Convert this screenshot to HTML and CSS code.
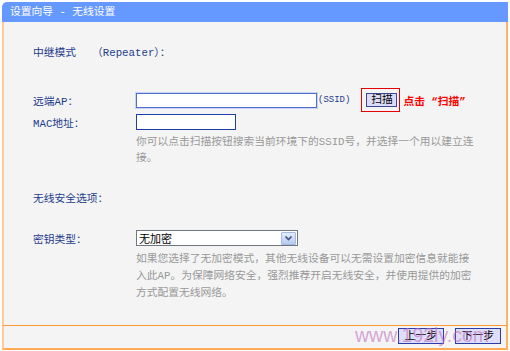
FILE: index.html
```html
<!DOCTYPE html>
<html lang="zh-CN">
<head>
<meta charset="utf-8">
<title>设置向导 - 无线设置</title>
<link rel="stylesheet" href="styles.css">
</head>
<body>
<div class="panel">
  <div class="hd">设置向导 - 无线设置</div>
  <div class="bd">
    <div class="row title"><span class="name">中继模式</span><span class="mode">（Repeater）：</span></div>
    <div class="row ap">
      <span class="lbl">远端AP：</span>
      <input class="txt txt-ap" type="text">
      <span class="ssid">(SSID)</span>
      <span class="scanbox"><button class="btn scan" type="button">扫描</button></span>
      <span class="tip">点击 “扫描”</span>
    </div>
    <div class="row mac">
      <span class="lbl">MAC地址：</span>
      <input class="txt txt-mac" type="text">
    </div>
    <p class="hint hint1">你可以点击扫描按钮搜索当前环境下的SSID号，并选择一个用以建立连接。</p>
    <div class="row sec"><span class="lbl">无线安全选项：</span></div>
    <div class="row key">
      <span class="lbl">密钥类型：</span>
      <div class="select">
        <span class="sel-val">无加密</span>
        <span class="arrow"><svg width="13" height="12" viewBox="0 0 13 12"><path d="M3.5 4.5 L6.5 7.5 L9.5 4.5" fill="none" stroke="#3d5585" stroke-width="1.7"/></svg></span>
      </div>
    </div>
    <p class="hint hint2">如果您选择了无加密模式，其他无线设备可以无需设置加密信息就能接入此AP。为保障网络安全，强烈推荐开启无线安全，并使用提供的加密方式配置无线网络。</p>
  </div>
  <div class="ft">
    <button class="btn nav" type="button">上一步</button>
    <button class="btn nav" type="button">下一步</button>
    <span class="wm">www.192ly.com</span>
  </div>
</div>
</body>
</html>
```

FILE: styles.css
```css
body {
  margin: 0;
  background: #ffffff;
  font-family: "Liberation Mono", "Noto Sans CJK SC", monospace;
  font-size: 10.75px;
  color: #1e3c8c;
}

.panel {
  width: 506px;
  margin: 2px 0 0 2px;
}

.hd {
  height: 20px;
  line-height: 20px;
  background: #6699ff;
  color: #ffffff;
  padding-left: 8px;
  border-top-left-radius: 5px;
}

.bd {
  height: 303px;
  box-sizing: border-box;
  background: #f4f4f4;
  border-left: 2px solid #ffcc99;
  border-right: 2px solid #ffb366;
  padding: 19px 0 0 29px;
}

.row {
  display: flex;
  align-items: center;
}

.lbl {
  width: 103px;
  flex: none;
  white-space: nowrap;
}

.title {
  height: 20px;
}

.mode {
  margin-left: 16px;
}

.ap {
  height: 24px;
  margin-top: 27px;
}

.mac {
  height: 18px;
  margin-top: 1px;
}

.txt {
  box-sizing: border-box;
  margin: 0;
  padding: 0 2px;
  background: #ffffff;
  font: inherit;
  outline: none;
}

.txt-ap {
  width: 181px;
  height: 15px;
  border: 1px solid #4d6fd0;
  box-shadow: 0 0 0 1px rgba(120, 150, 230, 0.35);
}

.txt-mac {
  width: 100px;
  height: 16px;
  border: 1px solid #1f3fa8;
}

.ssid {
  font-size: 9px;
  margin-left: 1px;
}

.scanbox {
  display: inline-flex;
  margin-left: 11px;
  padding: 4px 2px 4px 4px;
  border: 1px solid #e60000;
}

.btn {
  box-sizing: border-box;
  margin: 0;
  padding: 0;
  font: inherit;
  color: #000000;
  background: #dcdcf8;
  border: 1px solid #3a4690;
  text-align: center;
  line-height: 12px;
}

.scan {
  width: 31px;
  height: 14px;
}

.tip {
  margin-left: 3px;
  color: #ff0000;
  font-weight: bold;
}

.hint {
  width: 340px;
  margin: 3px 0 0 103px;
  color: #999999;
  line-height: 16px;
}

.sec {
  height: 20px;
  margin-top: 21px;
}

.key {
  height: 18px;
  margin-top: 22px;
}

.select {
  box-sizing: border-box;
  width: 162px;
  height: 16px;
  display: flex;
  align-items: center;
  justify-content: space-between;
  background: #ffffff;
  border: 1px solid #6f7780;
  color: #000000;
  font-size: 11px;
}

.sel-val {
  padding-left: 2px;
}

.arrow {
  box-sizing: border-box;
  width: 15px;
  height: 13px;
  margin-right: 1px;
  display: flex;
  align-items: center;
  justify-content: center;
  background: linear-gradient(#e4ecfc, #b7caef);
  border: 1px solid #a3b9e4;
  border-radius: 1px;
}

.hint2 {
  margin-top: 4px;
  line-height: 17px;
}

.ft {
  position: relative;
  height: 20px;
  padding: 2px 5px 0 0;
  display: flex;
  justify-content: flex-end;
  align-items: flex-start;
  gap: 11px;
  background: #f4f4f4;
  border-left: 2px solid #ffcc99;
  border-right: 2px solid #ffb366;
  border-top: 1px solid #ff9933;
  border-bottom: 2px solid #ffaa55;
}

.nav {
  width: 46px;
  height: 16px;
  border-color: #2b3ea8;
  background: #dedefa;
}

.wm {
  position: absolute;
  left: 351px;
  top: -1px;
  font-family: "Liberation Sans", sans-serif;
  font-size: 19.5px;
  line-height: 20px;
  color: rgba(190, 110, 190, 0.6);
  pointer-events: none;
  white-space: nowrap;
}
```
